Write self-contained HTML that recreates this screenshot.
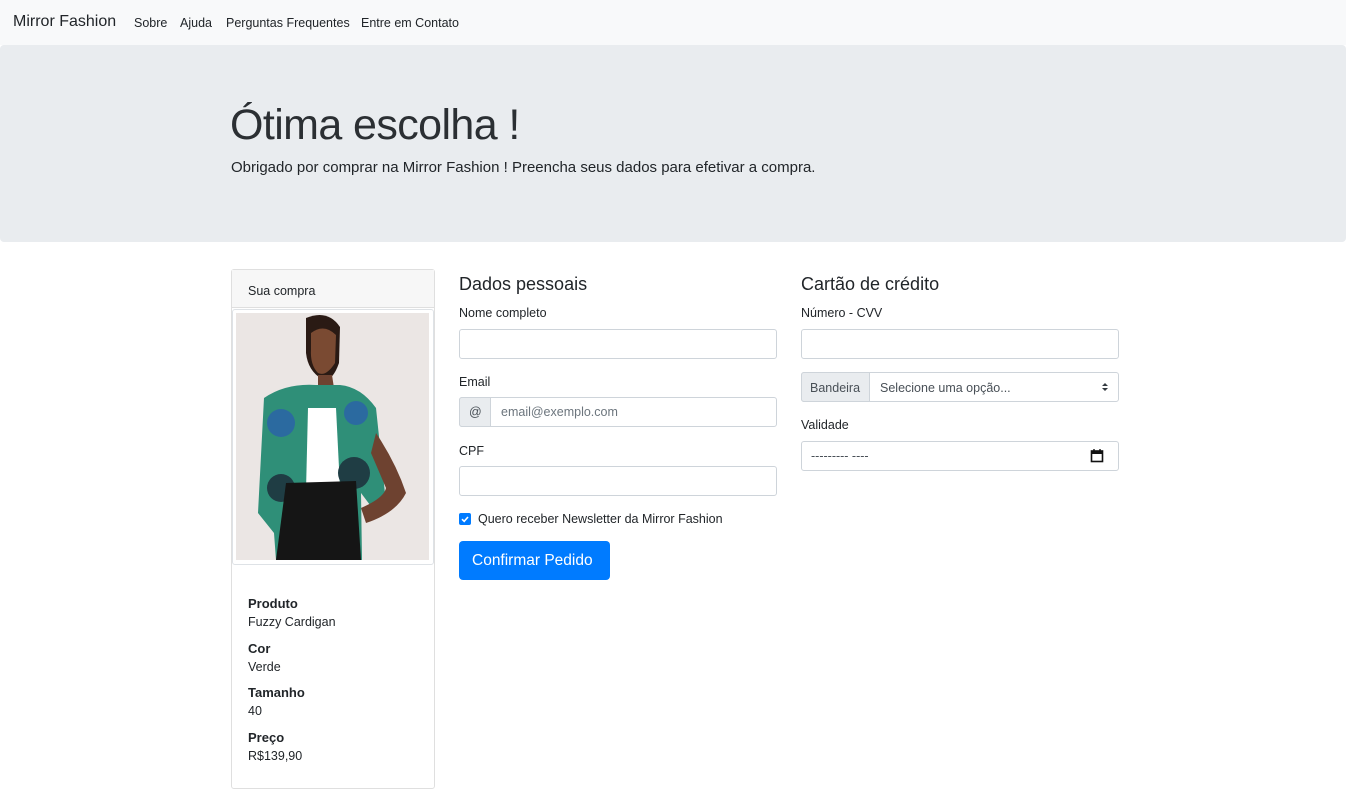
<!DOCTYPE html>
<html><head><meta charset="utf-8"><style>
*{box-sizing:border-box;margin:0;padding:0}
body{width:1346px;height:780px;overflow:hidden;background:#fff;font-family:"Liberation Sans",sans-serif;color:#212529;position:relative;font-size:13px}
.a{position:absolute;white-space:nowrap}
.nav{left:0;top:0;width:1346px;height:45px;background:#f8f9fa}
.jumbo{left:0;top:45px;width:1346px;height:197px;background:#e9ecef;border-radius:4px}
.inp{position:absolute;border:1px solid #ced4da;border-radius:3px;background:#fff;height:30px}
.lbl{position:absolute;font-size:12.5px}
.b{font-weight:bold}
</style></head><body>
<div class="a nav"></div>
<div class="a" style="left:13px;top:13px;font-size:16px">Mirror Fashion</div>
<div class="a" style="left:134px;top:16px;font-size:12.5px">Sobre</div>
<div class="a" style="left:180px;top:16px;font-size:12.5px">Ajuda</div>
<div class="a" style="left:226px;top:16px;font-size:12.5px">Perguntas Frequentes</div>
<div class="a" style="left:361px;top:16px;font-size:12.5px">Entre em Contato</div>
<div class="a jumbo"></div>
<div class="a" style="left:230px;top:101px;font-size:43px;color:#2b2f33;letter-spacing:-0.6px">Ótima escolha !</div>
<div class="a" style="left:231px;top:159px;font-size:15px">Obrigado por comprar na Mirror Fashion ! Preencha seus dados para efetivar a compra.</div>

<!-- card -->
<div class="a" style="left:231px;top:269px;width:204px;height:520px;border:1px solid #dfdfdf;border-radius:3px"></div>
<div class="a" style="left:232px;top:270px;width:202px;height:38px;background:#f7f7f7;border-bottom:1px solid #dfdfdf"></div>
<div class="a" style="left:248px;top:284px;font-size:12.5px">Sua compra</div>
<div class="a" style="left:232px;top:309px;width:202px;height:256px;border:1px solid #dee2e6;border-radius:3px;background:#fff"></div>
<svg class="a" style="left:236px;top:313px" width="193" height="247" viewBox="0 0 193 247">
<rect width="193" height="247" fill="#ebe6e4"/>
<path d="M70 5 Q92 -4 104 14 L103 50 Q96 70 86 66 Q72 58 70 40 Z" fill="#2a1a14"/>
<path d="M75 20 Q88 10 100 22 L99 50 Q90 64 82 60 Q74 52 75 36Z" fill="#7a4a32"/>
<path d="M82 62 L96 62 L98 75 L82 76Z" fill="#6e4230"/>
<path d="M28 85 Q50 70 80 72 L104 72 Q125 74 140 95 L150 190 L140 200 L125 180 L126 247 L40 247 L38 220 L22 200 Z" fill="#2f8f78"/>
<path d="M140 120 Q160 150 170 180 Q160 200 130 210 L125 195 Q148 185 150 175 L135 140Z" fill="#6e4230"/>
<path d="M72 95 L100 95 L104 175 L70 178Z" fill="#fff"/>
<circle cx="45" cy="110" r="14" fill="#2b6aa0"/><circle cx="120" cy="100" r="12" fill="#2b6aa0"/>
<circle cx="118" cy="160" r="16" fill="#1f3d44"/><circle cx="45" cy="175" r="14" fill="#1f3d44"/>
<path d="M50 170 L120 168 L125 247 L40 247Z" fill="#151515"/>
</svg>
<div class="a b" style="left:248px;top:596px">Produto</div>
<div class="a" style="left:248px;top:615px;font-size:12.5px">Fuzzy Cardigan</div>
<div class="a b" style="left:248px;top:641px">Cor</div>
<div class="a" style="left:248px;top:660px;font-size:12.5px">Verde</div>
<div class="a b" style="left:248px;top:685px">Tamanho</div>
<div class="a" style="left:248px;top:704px;font-size:12.5px">40</div>
<div class="a b" style="left:248px;top:730px">Preço</div>
<div class="a" style="left:248px;top:749px;font-size:12.5px">R$139,90</div>

<!-- dados pessoais -->
<div class="a" style="left:459px;top:274px;font-size:18px">Dados pessoais</div>
<div class="lbl" style="left:459px;top:306px">Nome completo</div>
<div class="inp" style="left:459px;top:329px;width:318px"></div>
<div class="lbl" style="left:459px;top:375px">Email</div>
<div class="inp" style="left:459px;top:397px;width:318px"></div>
<div class="a" style="left:459px;top:397px;width:32px;height:30px;background:#e9ecef;border:1px solid #ced4da;border-radius:3px 0 0 3px"></div>
<div class="a" style="left:469px;top:405px;font-size:12.5px;color:#495057">@</div>
<div class="a" style="left:501px;top:405px;font-size:12.5px;color:#6c757d">email@exemplo.com</div>
<div class="lbl" style="left:459px;top:444px">CPF</div>
<div class="inp" style="left:459px;top:466px;width:318px"></div>
<div class="a" style="left:459px;top:513px;width:12px;height:12px;background:#007bff;border-radius:2px"></div>
<svg class="a" style="left:459px;top:513px" width="12" height="12"><path d="M3 6.2 L5.2 8.3 L9 4" stroke="#fff" stroke-width="1.6" fill="none"/></svg>
<div class="lbl" style="left:478px;top:512px">Quero receber Newsletter da Mirror Fashion</div>
<div class="a" style="left:459px;top:541px;width:151px;height:39px;background:#007bff;border-radius:4px"></div>
<div class="a" style="left:472px;top:552px;font-size:15.5px;color:#fff">Confirmar Pedido</div>

<!-- cartão -->
<div class="a" style="left:801px;top:274px;font-size:18px">Cartão de crédito</div>
<div class="lbl" style="left:801px;top:306px">Número - CVV</div>
<div class="inp" style="left:801px;top:329px;width:318px"></div>
<div class="inp" style="left:801px;top:372px;width:318px"></div>
<div class="a" style="left:801px;top:372px;width:69px;height:30px;background:#e9ecef;border:1px solid #ced4da;border-radius:3px 0 0 3px"></div>
<div class="a" style="left:810px;top:381px;font-size:12.5px;color:#495057">Bandeira</div>
<div class="a" style="left:880px;top:381px;font-size:12.5px;color:#495057">Selecione uma opção...</div>
<svg class="a" style="left:1101px;top:382px" width="8" height="10"><path d="M1 4 L4 1 L7 4Z M1 6 L4 9 L7 6Z" fill="#343a40"/></svg>
<div class="lbl" style="left:801px;top:418px">Validade</div>
<div class="inp" style="left:801px;top:441px;width:318px"></div>
<div class="a" style="left:811px;top:449px;font-size:12.5px;color:#495057">--------- ----</div>
<svg class="a" style="left:1090px;top:448px" width="14" height="15"><rect x="1.5" y="3" width="11" height="10.5" fill="none" stroke="#111" stroke-width="1.6"/><rect x="1.5" y="3" width="11" height="3" fill="#111"/><path d="M4 1v3M10 1v3" stroke="#111" stroke-width="1.4"/></svg>
</body></html>
